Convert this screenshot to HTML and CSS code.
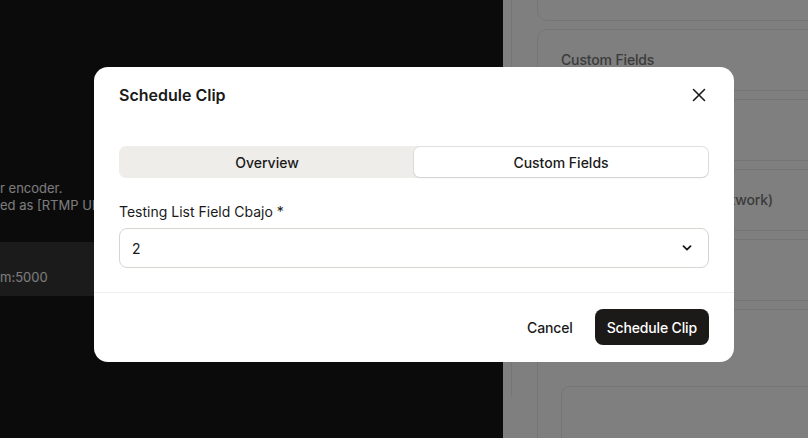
FILE: index.html
```html
<!DOCTYPE html>
<html lang="en">
<head>
<meta charset="utf-8">
<title>Schedule Clip</title>
<link rel="stylesheet" href="styles.css">
</head>
<body>
<div class="page">
  <section class="left">
    <div class="clip">
      <p class="hint">r encoder.</p>
      <p class="hint">ed as [RTMP UR</p>
    </div>
    <div class="code"><span class="clip">m:5000</span></div>
  </section>
  <section class="right">
    <div class="column">
      <div class="card card-top"></div>
      <div class="card"><span class="card-title">Custom Fields</span></div>
      <div class="card"></div>
      <div class="card"><span class="card-title">Primary Ingest Server (Network)</span></div>
      <div class="card"></div>
      <div class="card card-last"><div class="inner"></div></div>
    </div>
  </section>
</div>
<div class="overlay"></div>
<div class="modal" role="dialog" aria-labelledby="modal-title">
  <header class="modal-header">
    <h2 id="modal-title" class="modal-title">Schedule Clip</h2>
    <button class="close" aria-label="Close">
      <svg width="14" height="14" viewBox="0 0 14 14" fill="none" stroke="#1a1a1a" stroke-width="1.6" stroke-linecap="round"><path d="M1.5 1.5l11 11M12.5 1.5l-11 11"/></svg>
    </button>
  </header>
  <div class="modal-body">
    <div class="tabs">
      <button class="tab">Overview</button>
      <button class="tab active">Custom Fields</button>
    </div>
    <label class="field-label">Testing List Field Cbajo *</label>
    <div class="select">
      <span>2</span>
      <svg width="10" height="6" viewBox="0 0 10 6" fill="none" stroke="#1a1a1a" stroke-width="1.8" stroke-linecap="round" stroke-linejoin="round"><path d="M1.5 1.2L5 4.6 8.5 1.2"/></svg>
    </div>
  </div>
  <footer class="modal-footer">
    <button class="btn ghost">Cancel</button>
    <button class="btn primary">Schedule Clip</button>
  </footer>
</div>
</body>
</html>
```
FILE: styles.css
```css
* { box-sizing: border-box; }
html, body { margin: 0; padding: 0; }
body {
  width: 808px;
  height: 438px;
  overflow: hidden;
  font-family: Inter, "Noto Sans", "Liberation Sans", sans-serif;
  color: #1a1a1a;
}
.page {
  display: flex;
  width: 808px;
  height: 438px;
  overflow: hidden;
}
.left {
  width: 503px;
  flex: none;
  background: #161616;
  padding-top: 180px;
  overflow: hidden;
}
.clip {
  display: block;
  width: 94px;
  overflow: hidden;
  white-space: nowrap;
}
.hint {
  margin: 0;
  font-size: 13px;
  line-height: 17px;
  color: #f7f7f7;
  white-space: nowrap;
}
.code {
  margin-top: 28px;
  width: 320px;
  height: 54px;
  background: #373737;
  padding-top: 27px;
  font-size: 13px;
  line-height: 17px;
  color: #f7f7f7;
}
.right {
  flex: 1;
  background: #fff;
  padding-left: 8px;
  overflow: hidden;
}
.column {
  height: 100%;
  border-left: 1px solid #ebebeb;
  padding-left: 25px;
}
.card {
  width: 400px;
  height: 62px;
  border: 1px solid #ebebeb;
  border-radius: 10px;
  margin-bottom: 8px;
  padding: 21px 0 0 23px;
}
.card-top {
  margin-top: -41px;
}
.card-last {
  height: 200px;
  padding-top: 76px;
}
.inner {
  height: 120px;
  border: 1px solid #ebebeb;
  border-radius: 8px;
}
.card-title {
  display: block;
  font-size: 14px;
  line-height: 18px;
  font-weight: 500;
  letter-spacing: -0.15px;
  color: #777;
  white-space: nowrap;
}
.overlay {
  position: fixed;
  inset: 0;
  background: rgba(0, 0, 0, 0.5);
}
.modal {
  position: absolute;
  left: 94px;
  top: 67px;
  width: 640px;
  background: #fff;
  border-radius: 14px;
}
.modal-header {
  display: flex;
  align-items: center;
  justify-content: space-between;
  padding: 16px 23px 0 25px;
}
.modal-title {
  margin: 0;
  font-size: 16px;
  line-height: 24px;
  font-weight: 600;
  color: #1a1a1a;
}
.close {
  width: 24px;
  height: 24px;
  display: flex;
  align-items: center;
  justify-content: center;
  padding: 0;
  border: 0;
  background: none;
}
.modal-body {
  padding: 39px 25px 24px;
}
.tabs {
  display: flex;
  height: 32px;
  padding: 1px;
  background: #efedea;
  border-radius: 7px;
}
.tab {
  flex: 1;
  border: 0;
  background: none;
  font-family: inherit;
  font-size: 14px;
  font-weight: 500;
  color: #1a1a1a;
  border-radius: 6px;
  padding: 0;
}
.tab.active {
  background: #fff;
  box-shadow: 0 0 0 1px rgba(0, 0, 0, 0.05), 0 1px 2px rgba(0, 0, 0, 0.08);
}
.field-label {
  display: block;
  margin-top: 24px;
  font-size: 14px;
  line-height: 20px;
  color: #1a1a1a;
}
.select {
  margin-top: 6px;
  height: 40px;
  border: 1px solid #d8d5d1;
  border-radius: 8px;
  display: flex;
  align-items: center;
  justify-content: space-between;
  padding: 0 16px 0 12px;
  font-size: 14px;
}
.modal-footer {
  border-top: 1px solid #efefef;
  display: flex;
  justify-content: flex-end;
  gap: 6px;
  padding: 16px 25px 17px;
}
.btn {
  height: 36px;
  border: 0;
  border-radius: 8px;
  font-family: inherit;
  font-size: 14px;
  font-weight: 500;
  letter-spacing: -0.15px;
  padding: 0 12px;
}
.ghost {
  background: none;
  color: #1a1a1a;
  padding: 0 16px;
}
.primary {
  background: #1c1a19;
  color: #fff;
}
```
